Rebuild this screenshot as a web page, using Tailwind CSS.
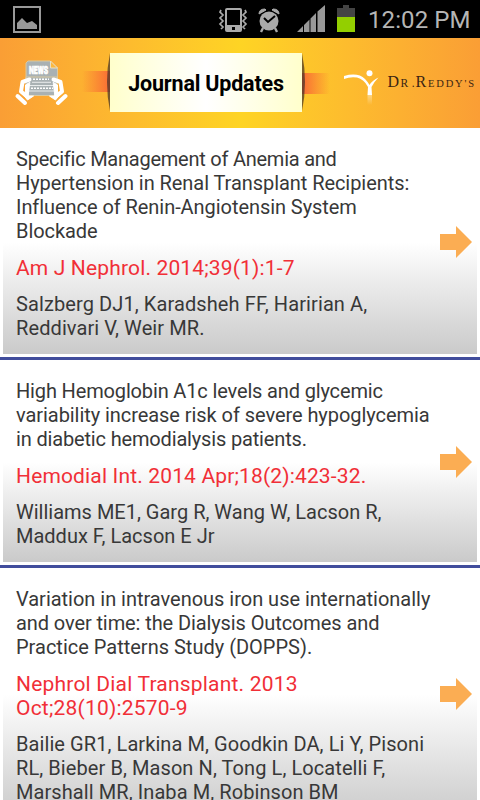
<!DOCTYPE html>
<html lang="en">
<head>
    <meta charset="UTF-8">
    <title>Journal Updates</title>
    <script src="https://cdn.jsdelivr.net/npm/@tailwindcss/browser@4"></script>
</head>
<body class="w-[480px] h-[800px] overflow-hidden bg-white font-[Roboto,sans-serif] text-[#383838]">
    <!-- Status bar -->
    <div class="h-[38px] bg-black flex items-center text-[#b5b5b5]">
        <svg class="ml-3 mt-px" width="30" height="28" viewBox="0 0 30 28">
            <rect x="2" y="1" width="26" height="25" fill="none" stroke="#999" stroke-width="2"/>
            <path d="M5 23v-6l5-5 5 5 5-2 5 4v4z" fill="#999"/>
        </svg>
        <svg class="ml-auto" width="144" height="38" viewBox="0 0 144 38">
            <g fill="#aaa">
                <path fill-rule="evenodd" d="M9 8h13q2 0 2 2v20q0 2-2 2H9q-2 0-2-2V10q0-2 2-2zm0 2v15h13V10zm5 17v3h3v-3z"/>
                <path d="M3 10l-1 2 3 3-3 3 3 3-3 3 3 3-2 2M27 10l1 2-3 3 3 3-3 3 3 3-3 3 2 2" fill="none" stroke="#aaa" stroke-width="1.7"/>
                <circle cx="51" cy="21" r="9.500"/>
                <path d="M41 14q0-5 6-5l1 1zM61 14q0-5-6-5l-1 1z" stroke="#aaa"/>
                <path d="M45 28l-2 4M57 28l2 4" stroke="#aaa" stroke-width="2.400"/>
                <path d="M46 18l4 4 7-6" fill="none" stroke="#000" stroke-width="2"/>
            </g>
            <path d="M79 32l6-6v6zM86 32v-7l5.500-5.500V32zM92.500 32V18.500l5.500-5.500v19zM99.500 32V11.500l7.500-6.500v27z" fill="#999"/>
            <path d="M119 8h6V5h6v3h6v9h-18z" fill="#444"/>
            <path d="M119 17h18v15h-18z" fill="#93cf00"/>
        </svg>
        <span class="w-[118px] pl-[6px] pt-px text-[24px] tracking-[0.1px] whitespace-nowrap">12:02 PM</span>
    </div>

    <!-- Header -->
    <header class="h-[90px] flex items-center bg-linear-to-r from-[#fa9e35] via-[#fed424] to-[#fa9e35]">
        <svg class="ml-[14px]" width="54" height="52" viewBox="14 57 54 52">
            <path d="M28 61h22l7.500 7v14H26V63z" fill="#a9b1b3" stroke="#d9c9a0"/>
            <path d="M50.500 61v7h7z" fill="#fbb840" stroke="#e8dfc5"/>
            <path d="M26 77h31v14l-1 4.500H27L26 91z" fill="#a9b1b3" stroke="#d9c9a0"/>
            <path d="M33 79.300h16M31 88.300h22" stroke="#fff" stroke-width="1.500" stroke-dasharray="2 1"/>
            <path d="M32 82.300h19M29 85.500h25M29 91h25" stroke="#e9ecec" stroke-width="1"/>
            <text x="29" y="74" font-size="11.500" font-weight="900" fill="#fff" stroke="#fff" stroke-width=".7" textLength="19" lengthAdjust="spacingAndGlyphs">NEWS</text>
            <g fill="#fff" stroke="#fff" stroke-linejoin="round" stroke-linecap="round">
                <path d="M29.500 79.500l-7 2.500-1.500 9.500 6 5" fill="none" stroke-width="4"/>
                <path d="M29.500 82.500l-4 2.500v6l-2 4 4 5 6-4h-5z" stroke-width="1"/>
                <path d="M17.500 96l7.500 7" stroke-width="4"/>
                <path d="M53.500 79.500l7 2.500 1.500 9.500-6 5" fill="none" stroke-width="4"/>
                <path d="M53.500 82.500l4 2.500v6l2 4-4 5-6-4h5z" stroke-width="1"/>
                <path d="M65.500 96l-7.500 7" stroke-width="4"/>
            </g>
        </svg>
        <div class="ml-[14px] w-[28px] h-[21px] -mt-[3px] bg-linear-to-r from-transparent to-[#f96b35] flex justify-end">
            <svg class="-mt-[18px] shrink-0" width="3" height="58" viewBox="0 0 3 58"><path d="M3 0Q-3 29 3 58z" fill="#40302a" fill-opacity=".7"/></svg>
        </div>
        <h1 class="w-[192px] h-[59px] -mt-px flex items-center justify-center bg-linear-to-r from-[#ffffcc] via-white to-[#ffffcc] text-black font-bold text-[21.5px] pt-[4px] whitespace-nowrap"><span class="tracking-[-0.2px]">Journal Updates</span></h1>
        <div class="w-[28px] h-[21px] mt-px bg-linear-to-l from-transparent to-[#f96b35]">
            <svg class="-mt-[20px]" width="3" height="58" viewBox="0 0 3 58"><path d="M0 0Q6 29 0 58z" fill="#40302a" fill-opacity=".7"/></svg>
        </div>
        <svg class="ml-[10px]" width="140" height="50" viewBox="340 58 140 50">
            <defs>
                <linearGradient id="fade" x1="0" y1="0" x2="0" y2="1">
                    <stop offset="0" stop-color="#fff" stop-opacity=".4"/>
                    <stop offset="1" stop-color="#fff" stop-opacity="0"/>
                </linearGradient>
            </defs>
            <circle cx="369.500" cy="73.300" r="3" fill="#fff"/>
            <path d="M344 76q14-4 21 3 3 3 4.500 6 3-5 9-7.500-5 5-7 9.500l.5 8h-4.500l.5-8q-4-8-11-9.500-7-1-13 1.500z" fill="#fff"/>
            <path d="M367.500 95h4.500v10h-4.500z" fill="url(#fade)"/>
            <g fill="#3a2412" font-family="Liberation Serif, serif">
                <text x="387.500" y="87" font-size="16">D</text>
                <text x="400.500" y="87" font-size="11.500" textLength="14">R.</text>
                <text x="415.500" y="87" font-size="16">R</text>
                <text x="428" y="87" font-size="10.500" textLength="46">EDDY'S</text>
            </g>
        </svg>
    </header>

    <!-- Journal list -->
    <main>
        <article class="h-[232px] border-b-[3px] border-[#414d9c] p-[3px]">
            <div class="h-full flex items-center justify-between pl-[13px] pr-[5px] bg-linear-to-b from-white from-50% to-[#cacaca]">
                <div class="pt-[2px] space-y-3 whitespace-nowrap leading-6">
                    <h2 class="-mt-px mb-[13px] text-[20px] tracking-[-0.06px]"><span class="tracking-[-0.24px]">Specific Management of Anemia and</span><br>Hypertension in Renal Transplant Recipients:<br>Influence of Renin-Angiotensin System<br>Blockade</h2>
                    <p class="text-[21px] tracking-[0.15px] text-[#f12f37]">Am J Nephrol. 2014;39(1):1-7</p>
                    <p class="text-[20px] tracking-[0.1px]">Salzberg DJ1, Karadsheh FF, Haririan A,<br>Reddivari V, Weir MR.</p>
                </div>
                <svg class="shrink-0 -mt-px" width="32" height="32" viewBox="0 0 32 32"><path d="M0 8h16V0l16 16-16 16v-8H0z" fill="#fbad53"/></svg>
            </div>
        </article>
        <article class="h-[208px] border-b-[3px] border-[#414d9c] p-[3px]">
            <div class="h-full flex items-center justify-between pl-[13px] pr-[5px] bg-linear-to-b from-white from-50% to-[#cacaca]">
                <div class="pt-[2px] space-y-3 whitespace-nowrap leading-6">
                    <h2 class="-mt-px mb-[13px] text-[20px] tracking-[-0.06px]"><span class="tracking-[-0.15px]">High Hemoglobin A1c levels and glycemic</span><br>variability increase risk of severe hypoglycemia<br><span class="tracking-[-0.16px]">in diabetic hemodialysis patients.</span></h2>
                    <p class="text-[21px] tracking-[0.15px] text-[#f12f37]">Hemodial Int. 2014 Apr;18(2):423-32.</p>
                    <p class="text-[20px]">Williams ME1, Garg R, Wang W, Lacson R,<br>Maddux F, Lacson E Jr</p>
                </div>
                <svg class="shrink-0 -mt-px" width="32" height="32" viewBox="0 0 32 32"><path d="M0 8h16V0l16 16-16 16v-8H0z" fill="#fbad53"/></svg>
            </div>
        </article>
        <article class="h-[256px] border-b-[3px] border-[#414d9c] p-[3px]">
            <div class="h-full flex items-center justify-between pl-[13px] pr-[5px] bg-linear-to-b from-white from-50% to-[#cacaca]">
                <div class="pt-[2px] space-y-3 whitespace-nowrap leading-6">
                    <h2 class="-mt-px mb-[13px] text-[20px] tracking-[-0.06px]"><span class="tracking-[-0.02px]">Variation in intravenous iron use internationally</span><br><span class="tracking-[-0.1px]">and over time: the Dialysis Outcomes and</span><br><span class="tracking-[0px]">Practice Patterns Study (DOPPS).</span></h2>
                    <p class="text-[21px] tracking-[0.2px] text-[#f12f37]">Nephrol Dial Transplant. 2013<br>Oct;28(10):2570-9</p>
                    <p class="text-[20px] tracking-[0.08px]">Bailie GR1, Larkina M, Goodkin DA, Li Y, Pisoni<br>RL, Bieber B, Mason N, Tong L, Locatelli F,<br>Marshall MR, Inaba M, Robinson BM</p>
                </div>
                <svg class="shrink-0 -mt-px" width="32" height="32" viewBox="0 0 32 32"><path d="M0 8h16V0l16 16-16 16v-8H0z" fill="#fbad53"/></svg>
            </div>
        </article>
    </main>
</body>
</html>
